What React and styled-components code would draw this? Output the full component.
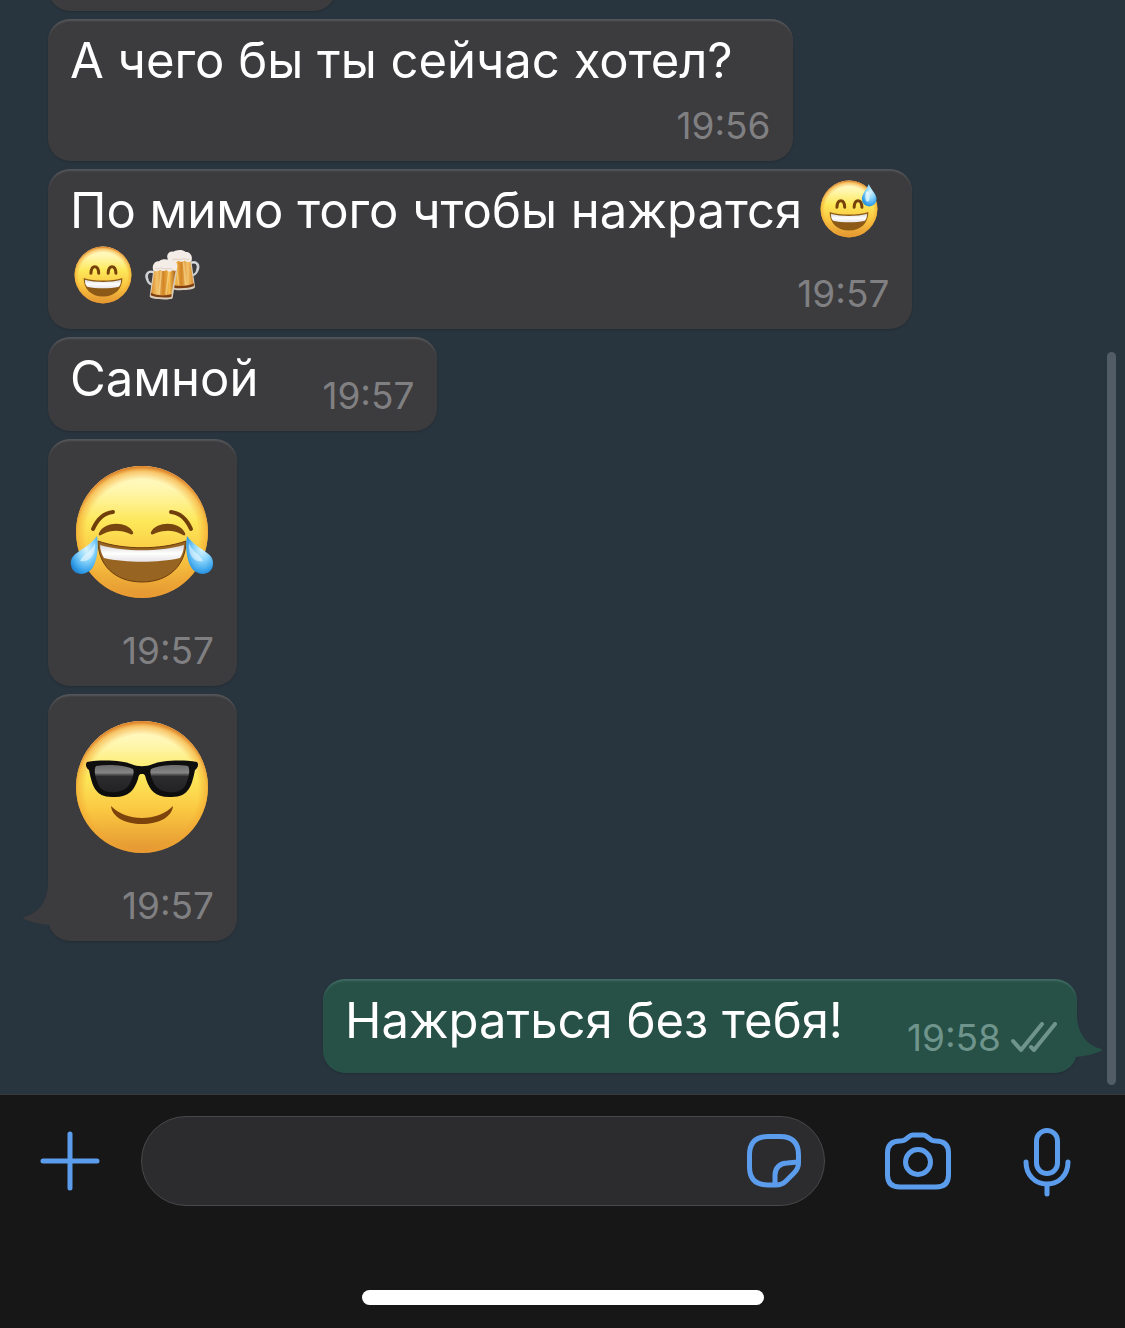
import React from 'react'
import styled, { createGlobalStyle } from 'styled-components'

const GlobalStyle = createGlobalStyle`
  * {
    box-sizing: border-box;
  }

  body {
    margin: 0;
    background-color: #171717;
    font-family: Inter, "Noto Sans", sans-serif;
  }
`

const Page = styled.div`
  height: 100vh;
  display: flex;
  flex-direction: column;
`

const Chat = styled.main`
  position: relative;
  flex: 1;
  min-height: 0;
  display: flex;
  flex-direction: column;
  justify-content: flex-end;
  align-items: flex-start;
  gap: 8px;
  padding: 0 48px 21px;
  overflow: hidden;
  background-color: #28343e;
`

const Bubble = styled.article`
  position: relative;
  flex-shrink: 0;
  display: grid;
  grid-template-columns: ${({ $layout }) => $layout === 'inline' ? 'auto auto' : 'auto'};
  max-width: 84%;
  padding: 9px 23px 13px 22px;
  border-radius: 22px;
  color: #ffffff;
  background-color: ${({ $own }) => $own ? '#275147' : '#3c3b3d'};
  box-shadow: inset 0 3px 2px -1px ${({ $own }) => $own ? '#416a62' : '#55575a'}, 0 1px 2px rgba(0, 0, 0, 0.15);
  ${({ $own }) => $own && 'align-self: flex-end; margin-top: 30px; padding-right: 20px;'}

  & > p, & > time {
    ${({ $layout }) => $layout === 'overlap' && 'grid-area: 1 / 1;'}
  }
`

const PreviousBubble = styled(Bubble)`
  width: 288px;
  height: 60px;
`

const Text = styled.p`
  margin: 0 ${({ $space }) => $space || 0}px 6px 0;
  font-size: 49px;
  line-height: 66px;
`

const Time = styled.time`
  display: flex;
  align-items: center;
  align-self: end;
  justify-self: end;
  gap: 10px;
  margin-top: 4px;
  font-size: 37px;
  line-height: 44px;
  color: ${({ $own }) => $own ? '#6f948b' : '#808083'};
`

const SmallEmoji = styled.svg`
  width: 62px;
  height: 62px;
  margin: 0 2px;
  vertical-align: -12px;
`

const Sticker = styled.svg`
  display: block;
  width: 144px;
  height: 144px;
  margin: 12px 0 21px;
  overflow: visible;
`

const Tail = styled.svg`
  position: absolute;
  bottom: 15px;
  width: 30px;
  height: 44px;
  ${({ $own }) => $own ? 'right: -25px; color: #275147;' : 'left: -25px; color: #3c3b3d; transform: scaleX(-1);'}
`

const ScrollThumb = styled.div`
  position: absolute;
  top: 352px;
  right: 9px;
  bottom: 9px;
  width: 9px;
  border-radius: 5px;
  background-color: #525c66;
`

const Footer = styled.footer`
  display: flex;
  flex-direction: column;
  align-items: center;
  border-top: 1px solid #383838;
  background-color: #171717;
`

const Toolbar = styled.form`
  width: 100%;
  display: flex;
  align-items: center;
  padding: 21px 54px 0 36px;
`

const IconButton = styled.button`
  display: flex;
  flex-shrink: 0;
  padding: 0;
  border: none;
  background: none;
  color: #5b9cec;
  cursor: pointer;

  & svg {
    fill: none;
    stroke: currentColor;
    stroke-width: 5;
    stroke-linecap: round;
    stroke-linejoin: round;
  }
`

const Field = styled.div`
  flex: 1;
  min-width: 0;
  height: 90px;
  display: flex;
  align-items: center;
  margin: 0 57px 0 37px;
  padding: 0 20px 0 36px;
  border: 1px solid #48484a;
  border-radius: 45px;
  background-color: #2c2c2e;

  & input {
    flex: 1;
    min-width: 0;
    height: 66px;
    border: none;
    outline: none;
    background: none;
    color: #ffffff;
    font-family: inherit;
    font-size: 49px;
  }
`

const MicButton = styled(IconButton)`
  margin-left: 69px;
`

const HomeIndicator = styled.div`
  width: 402px;
  height: 15px;
  margin: 84px 0 23px;
  border-radius: 8px;
  background-color: #ffffff;
`

const Defs = styled.svg`
  position: absolute;
  width: 0;
  height: 0;
`

const Gradients = () => (
  <Defs aria-hidden="true">
    <defs>
      <linearGradient id="face" x1="0" y1="0" x2="0" y2="1">
        <stop offset="0" stopColor="#fffbd0" />
        <stop offset="0.18" stopColor="#fff6ae" />
        <stop offset="0.42" stopColor="#fde85a" />
        <stop offset="0.68" stopColor="#fac741" />
        <stop offset="1" stopColor="#e39431" />
      </linearGradient>
      <radialGradient id="rim" cx="0.5" cy="0.53" r="0.52">
        <stop offset="0.82" stopColor="#f3a530" stopOpacity="0" />
        <stop offset="0.94" stopColor="#f3a530" stopOpacity="0.6" />
        <stop offset="1" stopColor="#de862b" />
      </radialGradient>
      <linearGradient id="teeth" x1="0" y1="0" x2="0" y2="1">
        <stop offset="0" stopColor="#d8d6d8" />
        <stop offset="0.5" stopColor="#ffffff" />
        <stop offset="1" stopColor="#e6e3e6" />
      </linearGradient>
      <radialGradient id="tear" cx="0.58" cy="0.35" r="0.7">
        <stop offset="0" stopColor="#d9f4ff" />
        <stop offset="0.45" stopColor="#86d3fb" />
        <stop offset="0.85" stopColor="#359fe9" />
        <stop offset="1" stopColor="#2287d4" />
      </radialGradient>
      <linearGradient id="lens" x1="0" y1="0" x2="0" y2="1">
        <stop offset="0" stopColor="#6b6b6c" />
        <stop offset="0.28" stopColor="#858586" />
        <stop offset="0.42" stopColor="#2c2c2e" />
        <stop offset="1" stopColor="#222224" />
      </linearGradient>
      <linearGradient id="beer" x1="0" y1="0" x2="1" y2="0">
        <stop offset="0" stopColor="#d98a2a" />
        <stop offset="0.25" stopColor="#f2c26a" />
        <stop offset="0.5" stopColor="#d28526" />
        <stop offset="0.75" stopColor="#f5bb4c" />
        <stop offset="1" stopColor="#a85d1b" />
      </linearGradient>
    </defs>
  </Defs>
)

const Face = () => (
  <>
    <circle cx="72" cy="72" r="66" fill="url(#face)" />
    <circle cx="72" cy="72" r="66" fill="url(#rim)" />
  </>
)

const Grin = () => (
  <>
    <Face />
    <g fill="none" stroke="#764209" strokeWidth="7" strokeLinecap="round">
      <path d="M44 68C45 48 61 48 62 68" />
      <path d="M84 68C85 48 101 48 102 68" />
    </g>
    <path d="M27 79C52 87 92 87 117 79C117 105 99 122 72 122S27 105 27 79Z" fill="#8c5a16" />
    <path d="M30 83C54 90 90 90 114 83C114 91 112 96 109 99C87 104 57 104 35 99C31 95 30 90 30 83Z" fill="url(#teeth)" />
  </>
)

const GrinEmoji = () => (
  <SmallEmoji viewBox="0 0 144 144" role="img" aria-label="😄">
    <Grin />
  </SmallEmoji>
)

const SweatEmoji = () => (
  <SmallEmoji viewBox="0 0 144 144" role="img" aria-label="😅">
    <Grin />
    <path d="M118 14C112 29 102 37 102 49A17 17 0 0 0 136 49C136 37 124 29 118 14Z" fill="url(#tear)" />
    <ellipse cx="115" cy="43" rx="5" ry="12" fill="#effbff" opacity="0.75" />
  </SmallEmoji>
)

const Mug = ({ flip }) => (
  <g transform={flip}>
    <path d="M342 339C324 332 314 345 322 362C326 372 332 376 340 376" fill="none" stroke="#c9cdd0" strokeWidth="7" strokeLinecap="round" />
    <path d="M342 339C327 333 318 346 325 361" fill="none" stroke="#f3f4f5" strokeWidth="2" />
    <path d="M341 325L411 332L398 416C398 423 329 422 329 411Z" fill="#d9cdbb" />
    <path d="M344 328L407 333L393 411C376 415 345 413 333 406Z" fill="url(#beer)" />
    <path d="M333 400C350 409 377 411 395 404L394 413C375 417 345 414 332 408Z" fill="#7d3f12" />
    <path d="M364 334L357 405M387 336L378 405" stroke="#ffe5a3" strokeWidth="5" opacity="0.5" />
    <path d="M340 333C334 319 345 303 357 306C368 296 386 300 394 305C408 303 416 316 411 326C411 337 402 335 397 333C391 341 383 336 379 332C371 339 365 333 360 332C352 337 345 337 340 333Z" fill="#f4ece7" />
    <path d="M345 326C353 333 360 323 367 327C376 333 386 323 397 330" fill="none" stroke="#dfcfc4" strokeWidth="3" />
  </g>
)

const BeersEmoji = () => (
  <SmallEmoji viewBox="294 254 186 186" role="img" aria-label="🍻">
    <Mug flip="translate(794 -28) scale(-1 1)" />
    <Mug />
  </SmallEmoji>
)

const JoySticker = () => (
  <Sticker viewBox="0 0 144 144" role="img" aria-label="😂">
    <Face />
    <g fill="none" stroke="#6f3f0b" strokeWidth="4" strokeLinecap="round">
      <path d="M23 69C27 60 34 53 43 52" />
      <path d="M121 69C117 60 110 53 101 52" />
    </g>
    <g fill="#764510">
      <path d="M29 73C35 61 57 61 63 72C64 75 61 75 58 73C49 70 41 70 33 74C30 76 28 76 29 73Z" />
      <path d="M115 73C109 61 87 61 81 72C80 75 83 75 86 73C95 70 103 70 111 74C114 76 116 76 115 73Z" />
    </g>
    <path d="M28 81C53 90 91 90 116 81C116 105 99 122 72 122S28 105 28 81Z" fill="#986421" stroke="#6c3d0d" strokeWidth="1" />
    <path d="M30 85C54 92 90 92 114 85C114 90 112 95 110 98C88 103 56 103 34 98C32 95 30 90 30 85Z" fill="url(#teeth)" />
    <path d="M27 76C29 88 27 100 23 107C18 116 3 117 1 105C-1 92 16 91 27 76Z" fill="url(#tear)" />
    <path d="M117 76C115 88 117 100 121 107C126 116 141 117 143 105C145 92 128 91 117 76Z" fill="url(#tear)" />
    <path d="M25 83C22 92 13 94 10 101C20 103 26 94 25 83Z" fill="#ffffff" opacity="0.5" />
    <path d="M119 83C118 94 123 103 133 101C130 94 122 92 119 83Z" fill="#ffffff" opacity="0.5" />
  </Sticker>
)

const CoolSticker = () => (
  <Sticker viewBox="0 0 144 144" role="img" aria-label="😎">
    <Face />
    <path d="M17 47C34 44 54 46 61 49C68 52 76 52 83 49C90 46 110 44 127 47C129 49 128 53 125 55C122 70 119 82 102 82C86 83 80 76 76 64C75 59 74 59 72 59S69 59 68 64C64 76 58 83 42 82C25 82 22 70 19 55C16 53 15 49 17 47Z" fill="#0e0e0f" />
    <path d="M26 51C38 49 54 50 63 54C65 57 62 65 59 70C53 79 34 80 29 71C26 65 23 55 26 51Z" fill="url(#lens)" />
    <path d="M118 51C106 49 90 50 81 54C79 57 82 65 85 70C91 79 110 80 115 71C118 65 121 55 118 51Z" fill="url(#lens)" />
    <path d="M41 91C56 107 88 107 103 91C102 102 89 109 72 109S42 102 41 91Z" fill="#7c430c" />
  </Sticker>
)

const BubbleTail = ({ own }) => (
  <Tail $own={own} viewBox="0 0 30 44" aria-hidden="true">
    <path d="M0 0H5C5 19 14 31 29 35Q31 36 29 37Q18 42 3 43L0 44Z" fill="currentColor" />
  </Tail>
)

const ReadTicks = () => (
  <svg width="46" height="32" viewBox="0 0 46 32" fill="none" stroke="currentColor" strokeWidth="4" strokeLinecap="round" strokeLinejoin="round" role="img" aria-label="Прочитано">
    <path d="M2 19L10 28L31 2" />
    <path d="M20 25L23 28L44 2" />
  </svg>
)

function App() {
  return (
    <Page>
      <GlobalStyle />
      <Gradients />
      <Chat>
        <PreviousBubble />
        <Bubble>
          <Text $space={38}>А чего бы ты сейчас хотел?</Text>
          <Time>19:56</Time>
        </Bubble>
        <Bubble $layout="overlap">
          <Text>
            По мимо того чтобы нажратся <SweatEmoji /><GrinEmoji /><BeersEmoji />
          </Text>
          <Time>19:57</Time>
        </Bubble>
        <Bubble $layout="inline">
          <Text $space={64}>Самной</Text>
          <Time>19:57</Time>
        </Bubble>
        <Bubble>
          <JoySticker />
          <Time>19:57</Time>
        </Bubble>
        <Bubble>
          <CoolSticker />
          <Time>19:57</Time>
          <BubbleTail />
        </Bubble>
        <Bubble $layout="inline" $own>
          <Text $space={64}>Нажраться без тебя!</Text>
          <Time $own>
            19:58
            <ReadTicks />
          </Time>
          <BubbleTail own />
        </Bubble>
        <ScrollThumb />
      </Chat>
      <Footer>
        <Toolbar onSubmit={(e) => e.preventDefault()}>
          <IconButton type="button" aria-label="Прикрепить">
            <svg width="68" height="68" viewBox="0 0 68 68">
              <path d="M34 7V61M7 34H61" />
            </svg>
          </IconButton>
          <Field>
            <input type="text" aria-label="Сообщение" />
            <IconButton type="button" aria-label="Стикеры">
              <svg width="60" height="60" viewBox="0 0 60 60">
                <path d="M54.5 32V24C54.5 11 48 5.5 36 5.5H24C11 5.5 5.5 12 5.5 24V36C5.5 48 12 54 24 54H32C36 54 39 53 42 50L50 42C53 39 54.5 36 54.5 32Z" />
                <path d="M31 53V44C31 37 36 32 43 32L54 31" />
              </svg>
            </IconButton>
          </Field>
          <IconButton type="button" aria-label="Камера">
            <svg width="72" height="72" viewBox="0 0 72 72">
              <path d="M28 11C29 10 30 10 31 10H41C42 10 43 10 44 11L48 14C50 16 51 16 54 16C62 16 66.5 20 66.5 28V50C66.5 58 62 62 54 62H18C10 62 5.5 58 5.5 50V28C5.5 20 10 16 18 16C21 16 22 16 24 14Z" />
              <circle cx="36" cy="37" r="12.5" />
            </svg>
          </IconButton>
          <MicButton type="button" aria-label="Голосовое сообщение">
            <svg width="48" height="72" viewBox="0 0 48 72">
              <rect x="13.5" y="5.5" width="21" height="43" rx="10.5" />
              <path d="M3 37C3 50 12 59 24 59S45 50 45 37M24 59V69" />
            </svg>
          </MicButton>
        </Toolbar>
        <HomeIndicator />
      </Footer>
    </Page>
  )
}

export default App
